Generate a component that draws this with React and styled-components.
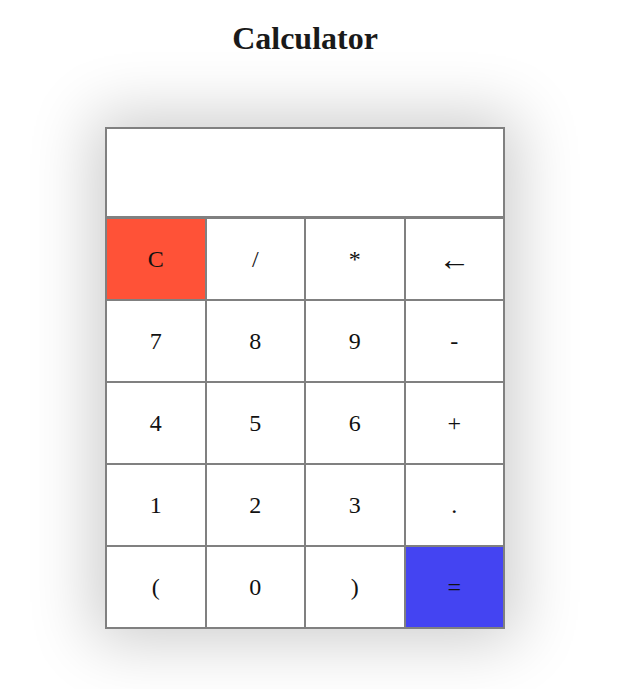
import React, { useState } from "react";
import styled, { createGlobalStyle } from "styled-components";

const GlobalStyle = createGlobalStyle`
  html, body {
    margin: 0;
    background: #ffffff;
    font-family: "Liberation Serif", "Times New Roman", serif;
  }
`;

const Page = styled.div`
  width: 610px;
  display: flex;
  flex-direction: column;
  align-items: center;
  padding-bottom: 60px;
`;

const Title = styled.h1`
  margin: 20px 0 0;
  font-size: 32px;
  line-height: 37px;
  font-weight: bold;
  color: #1a1a1a;
`;

const Calc = styled.div`
  margin-top: 70px;
  width: 400px;
  box-sizing: border-box;
  border: 1px solid #808080;
  box-shadow: 0 0 60px 12px rgba(0, 0, 0, 0.2);
  background: #ffffff;
`;

const Display = styled.div`
  height: 90px;
  box-sizing: border-box;
  border: 1px solid #808080;
  border-bottom-width: 2px;
  font-size: 28px;
  display: flex;
  align-items: center;
  justify-content: flex-end;
  padding: 0 12px;
`;

const Keys = styled.div`
  display: grid;
  grid-template-columns: repeat(4, 1fr);
`;

const Key = styled.button`
  height: 82px;
  box-sizing: border-box;
  border: 1px solid #808080;
  background: ${(p) => p.$bg || "#ffffff"};
  font-family: "Liberation Serif", "Times New Roman", serif;
  font-size: ${(p) => (p.$big ? "32px" : "24px")};
  color: #111111;
  padding: 0;
  cursor: pointer;
`;

const keys = [
  ["C", "#ff5237"], ["/"], ["*"], ["←", null, true],
  ["7"], ["8"], ["9"], ["-"],
  ["4"], ["5"], ["6"], ["+"],
  ["1"], ["2"], ["3"], ["."],
  ["("], ["0"], [")"], ["=", "#4444f2"],
];

export default function App() {
  const [value, setValue] = useState("");

  function press(k) {
    if (k === "C") return setValue("");
    if (k === "←") return setValue((v) => v.slice(0, -1));
    if (k === "=") {
      try {
        // eslint-disable-next-line no-new-func
        setValue(String(Function(`return (${value})`)()));
      } catch (e) {
        setValue("Error");
      }
      return;
    }
    setValue((v) => v + k);
  }

  return (
    <Page>
      <GlobalStyle />
      <Title>Calculator</Title>
      <Calc>
        <Display>{value}</Display>
        <Keys>
          {keys.map(([k, bg, big]) => (
            <Key key={k} $bg={bg} $big={big} onClick={() => press(k)}>
              {k}
            </Key>
          ))}
        </Keys>
      </Calc>
    </Page>
  );
}
